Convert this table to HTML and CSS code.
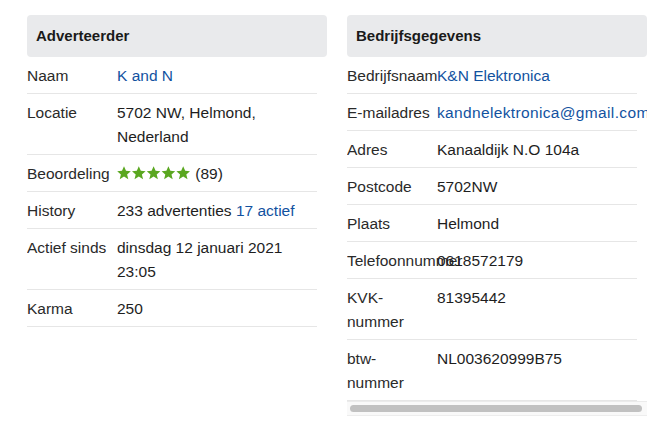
FILE: index.html
```html
<!DOCTYPE html>
<html lang="nl">
<head>
<meta charset="utf-8">
<title>Adverteerder</title>
<link rel="stylesheet" href="styles.css">
</head>
<body>
<div class="page">
  <section class="panel">
    <h2 class="panel-title">Adverteerder</h2>
    <div class="scroll">
      <dl class="info">
        <div class="row"><dt>Naam</dt><dd><a href="#">K and N</a></dd></div>
        <div class="row"><dt>Locatie</dt><dd>5702 NW, Helmond, Nederland</dd></div>
        <div class="row"><dt>Beoordeling</dt><dd><span class="stars"><svg viewBox="0 0 74 14" width="74" height="14" aria-hidden="true"><defs><polygon id="st" points="7,0.3 9,4.8 13.8,5.2 10.1,8.4 11.3,13.2 7,10.6 2.7,13.2 3.9,8.4 0.2,5.2 5,4.8"/></defs><use href="#st" x="0"/><use href="#st" x="14.8"/><use href="#st" x="29.6"/><use href="#st" x="44.4"/><use href="#st" x="59.2"/></svg></span> (89)</dd></div>
        <div class="row"><dt>History</dt><dd>233 advertenties <a href="#">17 actief</a></dd></div>
        <div class="row"><dt>Actief sinds</dt><dd>dinsdag 12 januari 2021 23:05</dd></div>
        <div class="row"><dt>Karma</dt><dd>250</dd></div>
      </dl>
    </div>
  </section>
  <section class="panel">
    <h2 class="panel-title">Bedrijfsgegevens</h2>
    <div class="scroll">
      <dl class="info">
        <div class="row"><dt>Bedrijfsnaam</dt><dd><a href="#">K&amp;N Elektronica</a></dd></div>
        <div class="row"><dt>E-mailadres</dt><dd><a class="email" href="#">kandnelektronica@gmail.com</a></dd></div>
        <div class="row"><dt>Adres</dt><dd>Kanaaldijk N.O 104a</dd></div>
        <div class="row"><dt>Postcode</dt><dd>5702NW</dd></div>
        <div class="row"><dt>Plaats</dt><dd>Helmond</dd></div>
        <div class="row"><dt>Telefoonnummer</dt><dd>0618572179</dd></div>
        <div class="row"><dt>KVK-nummer</dt><dd>81395442</dd></div>
        <div class="row"><dt>btw-nummer</dt><dd>NL003620999B75</dd></div>
      </dl>
    </div>
    <div class="hscroll" aria-hidden="true"><div class="hscroll-thumb"></div></div>
  </section>
</div>
</body>
</html>
```
FILE: styles.css
```css
html, body {
  margin: 0;
  padding: 0;
  background: #ffffff;
}
body {
  font-family: "Liberation Sans", Arial, sans-serif;
  color: #1e1e1e;
}
.page {
  display: grid;
  grid-template-columns: 300px 300px;
  column-gap: 20px;
  align-items: start;
  padding: 15px 0 0 27px;
}
.panel-title {
  margin: 0;
  background: #e9eaec;
  border-radius: 4px;
  padding: 9px;
  font-size: 15px;
  line-height: 24px;
  font-weight: bold;
  color: #1a1a1a;
}
.scroll {
  overflow: hidden;
}
.hscroll {
  background: #f9f9f9;
  border-top: 1px solid #ebebeb;
  border-bottom: 1px solid #ededed;
  padding: 3px 5px 3px 3px;
}
.hscroll-thumb {
  height: 7px;
  border-radius: 4px;
  background: #c1c1c1;
}
.info {
  margin: 0;
  width: 290px;
  font-size: 15.5px;
  line-height: 24px;
}
.row {
  display: grid;
  grid-template-columns: 90px 200px;
  padding: 7px 0 5px;
  border-bottom: 1px solid #e6e6e6;
}
.row dt {
  padding-right: 6px;
  color: #2a2a2a;
}
.row dd {
  margin: 0;
}
a {
  color: #12529f;
  text-decoration: none;
}
.email {
  letter-spacing: 0.35px;
  white-space: nowrap;
}
.stars {
  display: inline-block;
  vertical-align: -1px;
  fill: #5aa720;
}
.stars svg {
  display: block;
}
```
